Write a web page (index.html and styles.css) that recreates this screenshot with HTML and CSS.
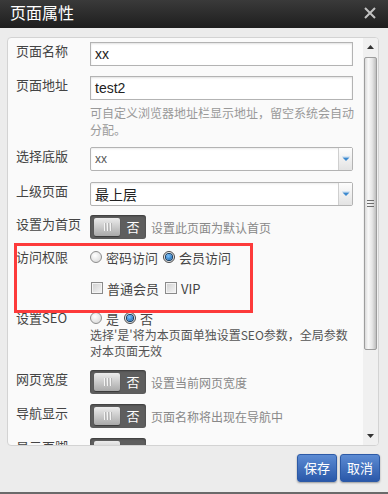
FILE: index.html
```html
<!DOCTYPE html>
<html lang="zh-CN">
<head>
<meta charset="utf-8">
<title>页面属性</title>
<link rel="stylesheet" href="styles.css">
</head>
<body>
<div class="dialog">
  <div class="titlebar">
    <span class="title">页面属性</span>
    <svg class="close" width="12" height="12" viewBox="0 0 12 12"><path d="M1 1L11 11M11 1L1 11" stroke="#c2c2c2" stroke-width="2" fill="none"/></svg>
  </div>
  <div class="body">
    <div class="panel">
      <div class="content">
        <div class="row r-name">
          <div class="label">页面名称</div>
          <div class="field"><div class="input">xx</div></div>
        </div>
        <div class="row r-addr">
          <div class="label">页面地址</div>
          <div class="field">
            <div class="input">test2</div>
            <div class="help">可自定义浏览器地址栏显示地址，留空系统会自动<br>分配。</div>
          </div>
        </div>
        <div class="row r-tpl">
          <div class="label">选择底版</div>
          <div class="field">
            <div class="select"><span class="val small">xx</span><span class="arrow"><svg width="8" height="6" viewBox="0 0 8 6"><path d="M0 0.5H8" stroke="#d6e6f5" stroke-width="1"/><path d="M0.5 1.5H7.5L4 5Z" fill="#3d8ad0"/></svg></span></div>
          </div>
        </div>
        <div class="row r-parent">
          <div class="label">上级页面</div>
          <div class="field">
            <div class="select"><span class="val">最上层</span><span class="arrow"><svg width="8" height="6" viewBox="0 0 8 6"><path d="M0 0.5H8" stroke="#d6e6f5" stroke-width="1"/><path d="M0.5 1.5H7.5L4 5Z" fill="#3d8ad0"/></svg></span></div>
          </div>
        </div>
        <div class="row r-toggle">
          <div class="label">设置为首页</div>
          <div class="field tfield">
            <div class="toggle"><span class="knob"><i></i><i></i><i></i></span><span class="off">否</span></div>
            <span class="desc">设置此页面为默认首页</span>
          </div>
        </div>
        <div class="perm">
          <div class="row r-opt">
            <div class="label">访问权限</div>
            <div class="field opts">
              <span class="opt"><span class="radio"></span>密码访问</span>
              <span class="opt"><span class="radio on"></span>会员访问</span>
            </div>
          </div>
          <div class="row r-opt r-check">
            <div class="label"></div>
            <div class="field opts">
              <span class="opt"><span class="check"></span>普通会员</span>
              <span class="opt"><span class="check"></span>VIP</span>
            </div>
          </div>
        </div>
        <div class="row r-seo">
          <div class="label">设置SEO</div>
          <div class="field">
            <div class="opts">
              <span class="opt"><span class="radio"></span>是</span>
              <span class="opt"><span class="radio on"></span>否</span>
            </div>
            <div class="help dark">选择'是'将为本页面单独设置SEO参数，全局参数<br>对本页面无效</div>
          </div>
        </div>
        <div class="row r-toggle">
          <div class="label">网页宽度</div>
          <div class="field tfield">
            <div class="toggle"><span class="knob"><i></i><i></i><i></i></span><span class="off">否</span></div>
            <span class="desc">设置当前网页宽度</span>
          </div>
        </div>
        <div class="row r-toggle">
          <div class="label">导航显示</div>
          <div class="field tfield">
            <div class="toggle"><span class="knob"><i></i><i></i><i></i></span><span class="off">否</span></div>
            <span class="desc">页面名称将出现在导航中</span>
          </div>
        </div>
        <div class="row r-toggle">
          <div class="label">显示页脚</div>
          <div class="field tfield">
            <div class="toggle"><span class="knob"><i></i><i></i><i></i></span><span class="off">否</span></div>
            <span class="desc">创建的新页面将出现页脚区域</span>
          </div>
        </div>
      </div>
      <div class="scrollbar">
        <div class="sb-btn"><svg width="7" height="4" viewBox="0 0 7 4"><path d="M0 4H7L3.5 0Z" fill="#333"/></svg></div>
        <div class="sb-thumb"><span class="grip"><i></i><i></i><i></i></span></div>
        <div class="sb-track"></div>
        <div class="sb-btn"><svg width="7" height="4" viewBox="0 0 7 4"><path d="M0 0H7L3.5 4Z" fill="#333"/></svg></div>
      </div>
    </div>
  </div>
  <div class="footer">
    <button class="btn">保存</button>
    <button class="btn">取消</button>
  </div>
</div>
</body>
</html>
```

FILE: styles.css
```css
* { box-sizing: border-box; }

html, body {
  margin: 0;
  padding: 0;
}

body {
  width: 388px;
  height: 494px;
  overflow: hidden;
  background: #ececec;
  font-family: "Noto Sans CJK SC", "Liberation Sans", sans-serif;
  color: #444;
}

.dialog {
  height: 494px;
  display: flex;
  flex-direction: column;
  border-bottom: 2px solid #6a6a6a;
}

.titlebar {
  height: 28px;
  flex: none;
  background: linear-gradient(#3a3a3a, #1e1e1e);
  display: flex;
  justify-content: space-between;
  align-items: flex-start;
  padding: 0 12px 0 10px;
}

.title {
  color: #fff;
  font-size: 16px;
  line-height: 24px;
}

.close {
  margin-top: 7px;
}

.body {
  flex: none;
  padding: 9px 9px 0 7px;
}

.panel {
  height: 409px;
  border: 1px solid #d3d3d3;
  border-radius: 4px;
  background: #fafafa;
  display: flex;
  overflow: hidden;
}

.content {
  flex: 1;
  min-width: 0;
  padding: 4px 0 0 8px;
}

.row {
  display: flex;
  align-items: flex-start;
}

.label {
  width: 74px;
  flex: none;
  font-size: 13px;
  line-height: 18px;
  color: #444;
  white-space: nowrap;
}

.field {
  flex: 1;
  min-width: 0;
}

.input {
  width: 263px;
  height: 24px;
  border: 1px solid #b3b3b3;
  background: #fff;
  box-shadow: inset 0 1px 2px rgba(0, 0, 0, 0.12);
  font-family: "Liberation Sans", "Noto Sans CJK SC", sans-serif;
  font-size: 14px;
  line-height: 22px;
  padding: 0 4px;
  color: #222;
}

.help {
  margin-top: 4px;
  font-size: 12px;
  line-height: 17px;
  color: #999;
  white-space: nowrap;
}

.help.dark {
  margin-top: 0;
  line-height: 16px;
  color: #555;
}

.r-name { margin-bottom: 10px; }
.r-addr { margin-bottom: 9px; }
.r-tpl { margin-bottom: 11px; }
.r-parent { margin-bottom: 9px; }
.r-toggle { margin-bottom: 10px; }

.select {
  width: 263px;
  height: 24px;
  border: 1px solid #b3b3b3;
  border-radius: 2px;
  background: #fff;
  display: flex;
  box-shadow: inset 0 1px 2px rgba(0, 0, 0, 0.08);
}

.select .val {
  flex: 1;
  padding: 0 4px;
  font-size: 14px;
  line-height: 22px;
  color: #222;
}

.select .val.small {
  font-family: "Liberation Sans", sans-serif;
  font-size: 12px;
  color: #555;
}

.select .arrow {
  width: 14px;
  border-left: 1px solid #cfcfcf;
  background: linear-gradient(#fdfdfd, #e3e3e3);
  display: flex;
  align-items: center;
  justify-content: center;
}

.tfield {
  display: flex;
  align-items: center;
}

.toggle {
  width: 56px;
  height: 24px;
  flex: none;
  border-radius: 3px;
  background: #5e5e5e;
  box-shadow: inset 0 1px 2px rgba(0, 0, 0, 0.4);
  display: flex;
  align-items: center;
  padding: 0 0 0 4px;
}

.knob {
  width: 26px;
  height: 18px;
  border-radius: 2px;
  background: linear-gradient(#ececec, #a9a9a9);
  box-shadow: 0 1px 1px rgba(0, 0, 0, 0.4);
  display: flex;
  align-items: center;
  justify-content: center;
  gap: 2px;
}

.knob i {
  width: 1px;
  height: 8px;
  background: #f4f4f4;
  box-shadow: 1px 0 0 #b5b5b5;
}

.off {
  flex: 1;
  text-align: center;
  color: #fff;
  font-size: 13px;
  line-height: 18px;
}

.desc {
  margin-left: 5px;
  font-size: 12px;
  line-height: 17px;
  color: #888;
  white-space: nowrap;
}

.perm {
  position: relative;
  margin-top: -1px;
  margin-bottom: 12px;
}

.perm::after {
  content: "";
  position: absolute;
  left: -2px;
  top: -5px;
  width: 233px;
  height: 64px;
  border: 3px solid #fd3a3a;
  pointer-events: none;
}

.r-opt .label { line-height: 18px; }

.r-check { margin-top: 13px; }

.opts {
  display: flex;
  align-items: center;
  height: 18px;
  font-size: 13px;
  color: #444;
}

.opt {
  display: flex;
  align-items: center;
  margin-right: 5px;
  white-space: nowrap;
}

.radio {
  width: 12px;
  height: 12px;
  margin-right: 4px;
  border-radius: 50%;
  border: 1px solid #8c8c8c;
  background: radial-gradient(circle at 40% 35%, #ffffff, #d4d4d4);
  display: flex;
  align-items: center;
  justify-content: center;
}

.radio.on {
  border-color: #4a4a4a;
}

.radio.on::after {
  content: "";
  width: 6px;
  height: 6px;
  border-radius: 50%;
  background: radial-gradient(circle at 40% 35%, #7cc4ff, #0b5aa8);
  box-shadow: 0 0 0 1px #123a60;
}

.check {
  width: 12px;
  height: 12px;
  margin: 0 4px 0 1px;
  border: 1px solid #8a8a8a;
  box-shadow: inset 0 0 0 1px #f4f4f4;
  background: linear-gradient(135deg, #cfcfcf, #f6f6f6);
}

.r-seo { margin-bottom: 11px; }

.scrollbar {
  width: 15px;
  flex: none;
  background: #f0f0f0;
  display: flex;
  flex-direction: column;
}

.sb-btn {
  height: 18px;
  flex: none;
  display: flex;
  align-items: center;
  justify-content: center;
}

.sb-thumb {
  height: 293px;
  flex: none;
  margin: 1px 1px 0 1px;
  border: 1px solid #9d9d9d;
  border-radius: 2px;
  background: linear-gradient(90deg, #dadada, #f8f8f8 30%, #e6e6e6 65%, #bdbdbd);
  display: flex;
  align-items: center;
  justify-content: center;
}

.grip {
  display: flex;
  flex-direction: column;
  gap: 2px;
}

.grip i {
  width: 7px;
  height: 1px;
  background: #6e6e6e;
}

.sb-track { flex: 1; }

.footer {
  flex: 1;
  display: flex;
  justify-content: flex-end;
  align-items: flex-start;
  gap: 3px;
  padding: 8px 8px 0 0;
}

.btn {
  width: 40px;
  height: 28px;
  padding: 0;
  border: 1px solid #2d5aa6;
  border-radius: 3px;
  background: linear-gradient(#5c8bd3, #2a58a9);
  box-shadow: 0 1px 2px rgba(0, 0, 0, 0.35);
  color: #fff;
  font-family: "Noto Sans CJK SC", sans-serif;
  font-size: 13px;
  line-height: 26px;
}
```
